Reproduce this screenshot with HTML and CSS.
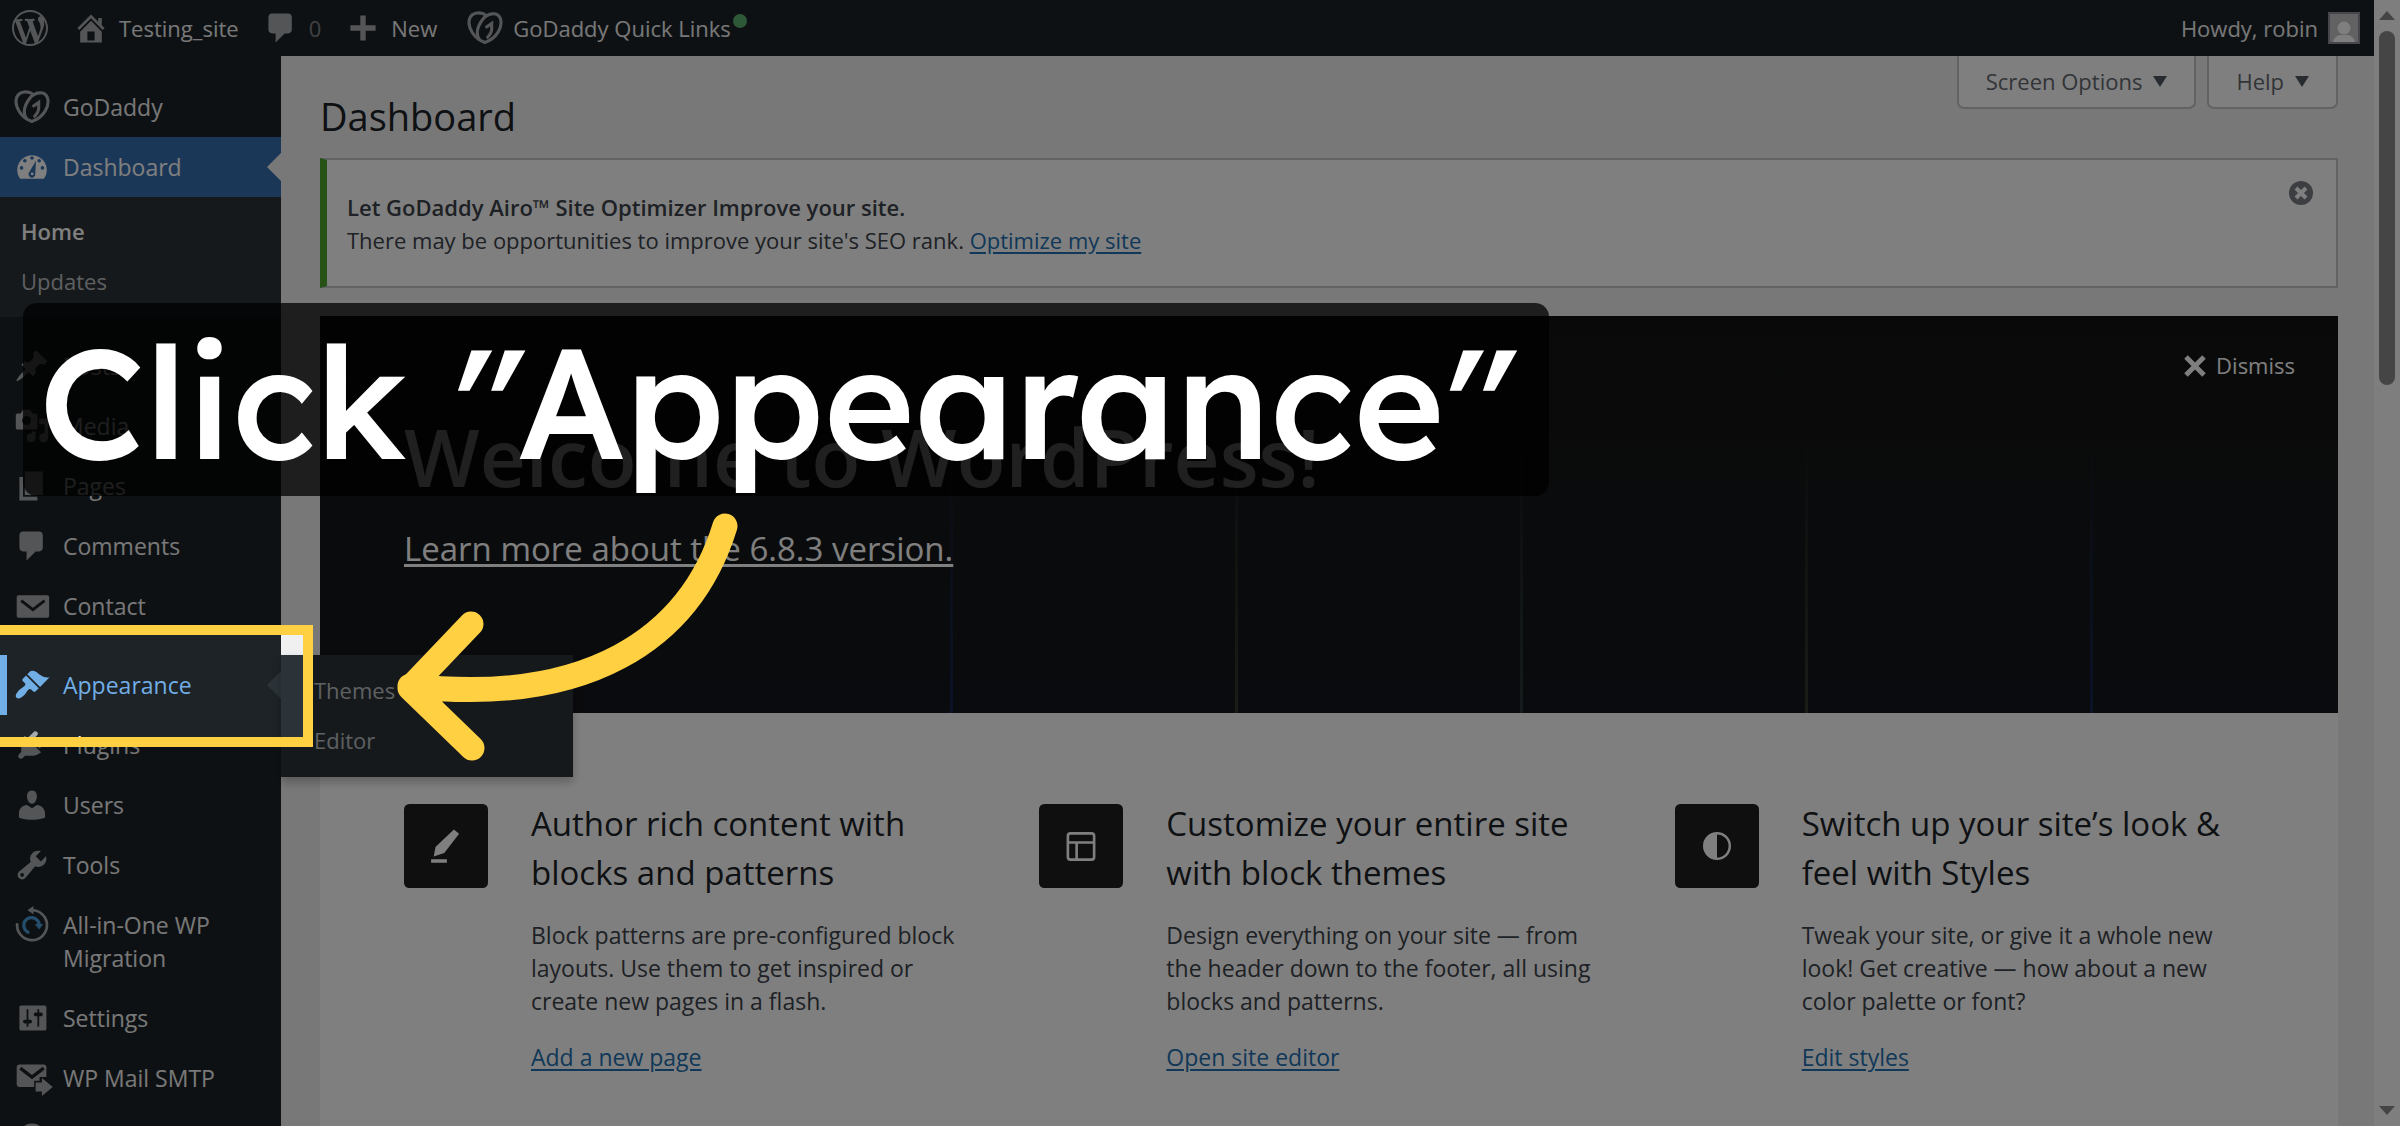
FILE: index.html
```html
<!DOCTYPE html>
<html lang="en">
<head>
    <meta charset="UTF-8">
    <meta name="viewport" content="width=device-width, initial-scale=1.0">
    <title>Dashboard - Testing_site</title>
    <link rel="stylesheet" href="styles.css">
</head>
<body>

<svg class="sprite" aria-hidden="true">
    <symbol id="i-godaddy" viewBox="0 0 35 32">
        <g fill="none" stroke="currentColor" stroke-width="3" stroke-linecap="round">
            <path d="M19 4C14 0 5 0 2.500 7C0 15 7 27 17.500 30"/>
            <path d="M17.500 30C29 26 35 15 32.500 7C30 0 20 1 15 8C9 16 9 23 12 27"/>
            <path d="M19 15L24 11.500V17C24 20 22 23 20 25"/>
        </g>
    </symbol>
    <symbol id="i-comment" viewBox="0 0 20 20"><path fill="currentColor" d="M5 2h9c1.100 0 2 .9 2 2v7c0 1.100-.9 2-2 2h-2l-5 5v-5H5c-1.100 0-2-.9-2-2V4c0-1.100.9-2 2-2z"/></symbol>
</svg>

<div class="window">
    <div class="admin">
        <header class="adminbar">
            <a class="bar-item" href="#" aria-label="About WordPress">
                <svg class="icon" viewBox="0 0 20 20"><path fill="currentColor" d="M20 10c0-5.510-4.490-10-10-10C4.480 0 0 4.490 0 10c0 5.520 4.480 10 10 10 5.510 0 10-4.480 10-10zM7.780 15.370L4.370 6.220c.55-.02 1.170-.08 1.170-.08.5-.06.44-1.130-.06-1.110 0 0-1.450.11-2.370.11-.18 0-.37 0-.58-.01C4.120 2.690 6.870 1.110 10 1.110c2.330 0 4.450.87 6.050 2.340-.68-.11-1.650.39-1.650 1.580 0 .74.45 1.360.9 2.100.35.61.55 1.360.55 2.460 0 1.490-1.400 5-1.400 5l-3.030-8.370c.54-.02.82-.17.82-.17.5-.05.44-1.250-.06-1.220 0 0-1.440.12-2.380.12-.87 0-2.330-.12-2.330-.12-.5-.03-.56 1.200-.06 1.220l.92.08 1.260 3.410zM17.410 10c.24-.64.74-1.870.43-4.250.7 1.290 1.050 2.710 1.050 4.250 0 3.290-1.730 6.240-4.400 7.780.97-2.590 1.940-5.200 2.920-7.780zM6.100 18.090C3.120 16.650 1.110 13.530 1.110 10c0-1.300.23-2.480.72-3.590C3.250 10.300 4.670 14.200 6.100 18.090zm4.030-6.630l2.580 6.980c-.86.29-1.760.45-2.710.45-.79 0-1.570-.11-2.290-.33.81-2.380 1.620-4.740 2.420-7.100z"/></svg>
            </a>
            <a class="bar-item bar-site" href="#">
                <svg class="icon" viewBox="0 0 20 20"><path fill="currentColor" fill-rule="evenodd" d="M16 8.500l1.530 1.530-1.060 1.060L10 4.600l-6.470 6.490-1.060-1.060L10 2.500l4 4v-2h2v4zm-6-2.460l6 5.990V18H4v-5.970zM12 17v-5H8v5h4z"/></svg>
                <span>Testing_site</span>
            </a>
            <a class="bar-item bar-comments" href="#">
                <svg class="icon"><use href="#i-comment"/></svg>
                <span class="count">0</span>
            </a>
            <a class="bar-item bar-new" href="#">
                <svg class="icon" viewBox="0 0 20 20"><path fill="currentColor" d="M8.500 3h3v5.500H17v3h-5.500V17h-3v-5.500H3v-3h5.500z"/></svg>
                <span>New</span>
            </a>
            <a class="bar-item bar-links" href="#">
                <svg class="icon"><use href="#i-godaddy"/></svg>
                <span>GoDaddy Quick Links</span>
                <i class="dot"></i>
            </a>
            <a class="bar-item bar-user" href="#">
                <span>Howdy, robin</span>
                <svg class="avatar" viewBox="0 0 32 32"><path fill="#c4c4c4" stroke="#8c8f94" stroke-width="2" d="M1 1h30v30H1z"/><circle cx="16" cy="16" r="6.500" fill="#fff"/><path fill="#fff" d="M5 30c1-5 5-7 8-7h6c3 0 7 2 8 7z"/></svg>
            </a>
        </header>

        <div class="admin-body">
            <nav class="sidebar">
                <ul class="menu">
                    <li><a href="#"><svg class="icon"><use href="#i-godaddy"/></svg><span>GoDaddy</span></a></li>
                    <li class="current">
                        <a href="#"><svg class="icon" viewBox="0 0 20 20"><path fill="currentColor" d="M3.400 16.500A8.200 8.200 0 1 1 16.600 16.500z"/><g fill="#376eae"><circle cx="10" cy="5" r="1"/><circle cx="6" cy="6.500" r="1"/><circle cx="14" cy="6.500" r="1"/><circle cx="4.200" cy="10.500" r="1"/><circle cx="15.800" cy="10.500" r="1"/><path d="M12.200 6.500l-.4 7.200a1.900 1.900 0 1 1-3.200-1z"/></g><circle cx="10.100" cy="13.800" r=".8" fill="currentColor"/></svg><span>Dashboard</span></a>
                        <ul class="submenu">
                            <li><a class="active" href="#">Home</a></li>
                            <li><a href="#">Updates</a></li>
                        </ul>
                    </li>
                    <li class="separator"></li>
                    <li><a href="#"><svg class="icon" viewBox="0 0 20 20"><path fill="currentColor" d="M10.440 3.020l1.820-1.820 6.360 6.350-1.830 1.820c-1.050-.68-2.480-.57-3.410.36l-.75.75c-.92.93-1.040 2.350-.35 3.410l-1.830 1.820-2.410-2.410-2.800 2.790c-.42.42-3.380 2.710-3.800 2.290s1.860-3.390 2.280-3.810l2.790-2.790L4.100 9.360l1.830-1.820c1.050.69 2.480.57 3.400-.36l.75-.75c.93-.92 1.050-2.350.36-3.410z"/></svg><span>Posts</span></a></li>
                    <li><a href="#"><svg class="icon" viewBox="0 0 20 20"><path fill="currentColor" fill-rule="evenodd" d="M13 11V4c0-.55-.45-1-1-1h-1.670L9 1H5L3.670 3H2c-.55 0-1 .45-1 1v7c0 .55.45 1 1 1h10c.55 0 1-.45 1-1zM7 4.500c1.380 0 2.500 1.120 2.500 2.500S8.380 9.500 7 9.500 4.500 8.380 4.500 7 5.620 4.500 7 4.500zM14 6h5v10.500c0 1.380-1.120 2.500-2.500 2.500S14 17.880 14 16.500s1.120-2.500 2.500-2.500c.17 0 .34.02.5.05V9h-3V6zm-4 8.050V13h2v3.500c0 1.380-1.120 2.500-2.500 2.500S7 17.880 7 16.500 8.120 14 9.500 14c.17 0 .34.02.5.05z"/></svg><span>Media</span></a></li>
                    <li><a href="#"><svg class="icon" viewBox="0 0 20 20"><path fill="currentColor" d="M6 15V2h10v13H6zm-1 1h8v2H3V5h2v11z"/></svg><span>Pages</span></a></li>
                    <li><a href="#"><svg class="icon"><use href="#i-comment"/></svg><span>Comments</span></a></li>
                    <li><a href="#"><svg class="icon" viewBox="0 0 20 20"><rect x="1.500" y="4" width="18" height="12.500" rx="1" fill="currentColor"/><path d="M4 7l6.500 5L17 7" fill="none" stroke="#1d2327" stroke-width="1.600"/></svg><span>Contact</span></a></li>
                    <li class="separator"></li>
                    <li class="hovered">
                        <a href="#"><svg class="icon" viewBox="0 0 20 20"><path fill="currentColor" d="M14.480 11.060L7.410 3.990l1.500-1.500c.5-.56 2.300-.47 3.510.32 1.210.8 1.430 1.280 2.910 2.100 1.180.64 2.450 1.260 4.450.85zm-.71.71L6.700 4.700 4.930 6.470c-.39.39-.39 1.020 0 1.410l1.060 1.060c.39.39.39 1.030 0 1.420-.6.6-1.430 1.110-2.210 1.690-.35.26-.7.53-1.010.84C1.430 14.230.4 16.080 1.400 17.070c.99 1 2.840-.03 4.180-1.360.31-.31.58-.66.85-1.020.57-.78 1.080-1.610 1.690-2.210.39-.39 1.020-.39 1.410 0l1.060 1.060c.39.39 1.020.39 1.410 0z"/></svg><span>Appearance</span></a>
                        <ul class="flyout">
                            <li><a href="#">Themes</a></li>
                            <li><a href="#">Editor</a></li>
                        </ul>
                    </li>
                    <li><a href="#"><svg class="icon" viewBox="0 0 20 20"><path fill="currentColor" d="M13.110 4.360L9.870 7.600 8 5.730l3.240-3.240c.35-.34 1.050-.2 1.560.32.52.51.66 1.210.31 1.550zm-8 1.770l.91-1.120 9.010 9.010-1.190.84c-.71.71-2.630 1.160-3.820 1.160H6.140L4.900 17.260c-.59.59-1.540.59-2.120 0-.59-.58-.59-1.530 0-2.120l1.240-1.240v-3.880c0-1.130.4-3.190 1.090-3.890zm7.260 3.970l3.240-3.240c.34-.35 1.040-.21 1.550.31.52.51.66 1.210.31 1.550l-3.240 3.250z"/></svg><span>Plugins</span></a></li>
                    <li><a href="#"><svg class="icon" viewBox="0 0 20 20"><path fill="currentColor" d="M10 9.250c-2.270 0-2.730-3.440-2.730-3.440C7 4.020 7.820 2 9.970 2c2.160 0 2.980 2.020 2.710 3.810 0 0-.41 3.440-2.680 3.440zm0 2.570L12.720 10c2.390 0 4.520 2.330 4.520 4.530v2.490s-3.650 1.130-7.240 1.130c-3.650 0-7.240-1.130-7.240-1.130v-2.490c0-2.250 1.940-4.480 4.470-4.480z"/></svg><span>Users</span></a></li>
                    <li><a href="#"><svg class="icon" viewBox="0 0 20 20"><path fill="currentColor" fill-rule="evenodd" d="M16.680 9.770c-1.340 1.340-3.300 1.670-4.950.99l-5.410 6.520c-.99.99-2.590.99-3.580 0s-.99-2.590 0-3.570l6.520-5.420c-.68-1.650-.35-3.610.99-4.950 1.280-1.280 3.120-1.620 4.720-1.060l-2.890 2.890 2.820 2.820 2.860-2.870c.53 1.580.18 3.390-1.080 4.650zM3.810 16.210c.4.39 1.040.39 1.430 0 .4-.4.4-1.040 0-1.430-.39-.4-1.030-.4-1.430 0-.39.39-.39 1.030 0 1.430z"/></svg><span>Tools</span></a></li>
                    <li><a href="#"><svg class="icon" viewBox="0 0 20 20"><g fill="none" stroke-width="1.500"><path stroke="currentColor" d="M1.800 9a8.300 8.300 0 1 0 8.200-7.200"/><path stroke="#4a9bd8" stroke-width="1.800" d="M8.500 14.300A4.300 4.300 0 1 1 14 10"/></g><path fill="currentColor" d="M7.500 1.800L10.800-.5v4.500z"/><path fill="#4a9bd8" d="M11.500 9.500h4.800L14 12.500z"/></svg><span>All-in-One WP Migration</span></a></li>
                    <li><a href="#"><svg class="icon" viewBox="0 0 20 20"><path fill="currentColor" fill-rule="evenodd" d="M18 16V4c0-.55-.45-1-1-1H4c-.55 0-1 .45-1 1v12c0 .55.45 1 1 1h13c.55 0 1-.45 1-1zM8 11h1c.55 0 1 .45 1 1s-.45 1-1 1H8v1.500c0 .28-.22.5-.5.5s-.5-.22-.5-.5V13H6c-.55 0-1-.45-1-1s.45-1 1-1h1V5.500c0-.28.22-.5.5-.5s.5.22.5.5V11zm5-2h-1c-.55 0-1-.45-1-1s.45-1 1-1h1V5.500c0-.28.22-.5.5-.5s.5.22.5.5V7h1c.55 0 1 .45 1 1s-.45 1-1 1h-1v5.500c0 .28-.22.5-.5.5s-.5-.22-.5-.5V9z"/></svg><span>Settings</span></a></li>
                    <li><a href="#"><svg class="icon" viewBox="0 0 20 20"><path fill="currentColor" d="M3 2.500h13.500c.8 0 1.500.6 1.500 1.500v5.500h-3.800v2h-3V15H3c-.8 0-1.500-.7-1.500-1.500V4c0-.9.7-1.500 1.500-1.500zM12 12.500h3.500V10l6 5-6 5v-2.500H12z"/><path fill="none" stroke="#1d2327" stroke-width="1.800" d="M3.500 4.500L10 9.500l6.500-5"/></svg><span>WP Mail SMTP</span></a></li>
                    <li><a href="#" aria-label="More"><svg class="icon" viewBox="0 0 20 20"><circle cx="10" cy="10" r="8" fill="currentColor"/></svg></a></li>
                </ul>
            </nav>

            <main class="content">
                <div class="screen-meta">
                    <button type="button">Screen Options <span class="caret"></span></button>
                    <button type="button">Help <span class="caret"></span></button>
                </div>

                <h1>Dashboard</h1>

                <div class="notice">
                    <p><strong>Let GoDaddy Airo™ Site Optimizer Improve your site.</strong></p>
                    <p>There may be opportunities to improve your site's SEO rank. <a href="#">Optimize my site</a></p>
                    <button class="notice-dismiss" type="button" aria-label="Dismiss this notice">
                        <svg viewBox="0 0 24 24"><circle cx="12" cy="12" r="12" fill="#787c82"/><path stroke="#fff" stroke-width="4" d="M7 7l10 10M17 7L7 17"/></svg>
                    </button>
                </div>

                <section class="welcome">
                    <div class="welcome-header">
                        <div class="beams"><i></i><i></i><i></i><i></i><i></i></div>
                        <h2>Welcome to WordPress!</h2>
                        <p><a href="#">Learn more about the 6.8.3 version.</a></p>
                        <a class="welcome-close" href="#">
                            <svg viewBox="0 0 22 22"><path stroke="currentColor" stroke-width="5" d="M2 2l18 18M20 2L2 20"/></svg>
                            Dismiss
                        </a>
                    </div>

                    <div class="columns">
                        <div class="column">
                            <svg class="tile" viewBox="0 0 48 48"><rect width="48" height="48" rx="3" fill="#1e1e1e"/><path fill="#fff" d="M28.500 14.500l3 2.500-8.500 11-6 2 1-5.500zM15.500 31.500h9v2h-9z"/></svg>
                            <div>
                                <h3>Author rich content with blocks and patterns</h3>
                                <p>Block patterns are pre-configured block layouts. Use them to get inspired or create new pages in a flash.</p>
                                <a href="#">Add a new page</a>
                            </div>
                        </div>
                        <div class="column">
                            <svg class="tile" viewBox="0 0 48 48"><rect width="48" height="48" rx="3" fill="#1e1e1e"/><path fill="none" stroke="#fff" stroke-width="1.500" d="M18 16.800h12q1.500 0 1.500 1.500v12q0 1.500-1.500 1.500H18q-1.500 0-1.500-1.500v-12q0-1.500 1.500-1.500zM16.500 22h15M21.500 22v9.500"/></svg>
                            <div>
                                <h3>Customize your entire site with block themes</h3>
                                <p>Design everything on your site — from the header down to the footer, all using blocks and patterns.</p>
                                <a href="#">Open site editor</a>
                            </div>
                        </div>
                        <div class="column">
                            <svg class="tile" viewBox="0 0 48 48"><rect width="48" height="48" rx="3" fill="#1e1e1e"/><circle cx="24" cy="24" r="7.300" fill="none" stroke="#fff" stroke-width="1.400"/><path fill="#fff" d="M24 16.500a7.500 7.500 0 0 0 0 15z"/></svg>
                            <div>
                                <h3>Switch up your site’s look &amp; feel with Styles</h3>
                                <p>Tweak your site, or give it a whole new look! Get creative — how about a new color palette or font?</p>
                                <a href="#">Edit styles</a>
                            </div>
                        </div>
                    </div>
                </section>
            </main>
        </div>
    </div>

    <div class="scrollbar">
        <i class="up"></i>
        <i class="thumb"></i>
        <i class="down"></i>
    </div>

    <!-- guide overlay -->
    <div class="spotlight"></div>
    <div class="caption">Click <i>"</i>Appearance<i>"</i></div>
    <svg class="pointer" viewBox="0 0 380 280"><path fill="none" stroke="#ffd042" stroke-width="25" stroke-linecap="round" stroke-linejoin="round" d="M345 26C310 140 206 206 30 186M91 124L30 188L92 248"/></svg>
</div>

</body>
</html>
```

FILE: styles.css
```css
* {
    box-sizing: border-box;
}
body {
    margin: 0;
    font-family: "Segoe UI", "Open Sans", "Noto Sans", sans-serif;
    font-size: 23px;
    line-height: 33px;
    color: #3c434a;
    background: #f0f0f1;
}
h1, h2, h3, p, ul {
    margin: 0;
    padding: 0;
}
ul {
    list-style: none;
}
a {
    color: #2271b1;
    text-underline-offset: 3px;
}
button {
    font: inherit;
    cursor: pointer;
}
.sprite {
    display: none;
}
.window {
    position: relative;
    display: flex;
    height: 100vh;
    overflow: hidden;
}
.admin {
    flex: 1;
    min-width: 0;
}
.icon {
    width: 36px;
    height: 36px;
    flex: none;
    color: #a7aaad;
    overflow: visible;
}

/* top bar */
.adminbar {
    display: flex;
    height: 56px;
    padding: 0 14px 0 12px;
    background: #1d2327;
}
.bar-item {
    display: flex;
    align-items: center;
    gap: 10px;
    color: #f0f0f1;
    font-size: 22px;
    text-decoration: none;
}
.bar-site {
    margin-left: 25px;
}
.bar-comments, .bar-new {
    margin-left: 24px;
}
.bar-links {
    margin-left: 30px;
}
.count {
    color: #80858a;
}
.dot {
    width: 14px;
    height: 14px;
    margin: -14px 0 0 -8px;
    border-radius: 50%;
    background: #5cb270;
}
.bar-user {
    margin-left: auto;
}
.avatar {
    width: 32px;
    height: 32px;
}

/* side menu */
.admin-body {
    display: flex;
}
.sidebar {
    width: 281px;
    flex: none;
    height: 100vh;
    padding-top: 21px;
    background: #1d2327;
}
.menu > li {
    position: relative;
}
.menu > li > a {
    display: flex;
    gap: 13px;
    min-height: 60px;
    padding: 14px 40px 13px 14px;
    color: #f0f0f1;
    text-decoration: none;
}
.menu .icon {
    margin: -2px 0 -1px;
}
.menu > li.separator {
    height: 19px;
}
.menu > li.current > a {
    position: relative;
    color: #fff;
    background: #376eae;
}
.current .icon {
    color: #fff;
}
.current > a::after {
    content: "";
    position: absolute;
    right: 0;
    top: 16px;
    border: 14px solid transparent;
    border-left: 0;
    border-right-color: #f0f0f1;
}
.submenu {
    padding: 10px 0;
    background: #2c3338;
}
.submenu a, .flyout a {
    display: block;
    padding: 8px 21px 9px;
    color: #bcc0c4;
    font-size: 22px;
    text-decoration: none;
}
.submenu .active {
    color: #fff;
    font-weight: 600;
}
.menu > li.hovered > a {
    color: #72aee6;
    box-shadow: inset 7px 0 0 #72aee6;
}
.hovered .icon {
    color: #72aee6;
}
.hovered::after {
    content: "";
    position: absolute;
    right: 0;
    top: 16px;
    border: 14px solid transparent;
    border-left: 0;
    border-right-color: #2c3338;
}
.flyout {
    position: absolute;
    left: 100%;
    top: 0;
    width: 292px;
    padding: 11px 0;
    background: #2c3338;
    box-shadow: 0 5px 9px rgba(0, 0, 0, .25);
    z-index: 2;
}
.flyout a {
    padding-left: 33px;
}

/* content */
.content {
    position: relative;
    flex: 1;
    min-width: 0;
    padding: 36px 36px 0 39px;
}
.screen-meta {
    position: absolute;
    top: 0;
    right: 36px;
    display: flex;
    gap: 11px;
}
.screen-meta button {
    display: flex;
    align-items: center;
    gap: 11px;
    height: 53px;
    padding: 0 27px;
    border: 2px solid #c3c4c7;
    border-top: 0;
    border-radius: 0 0 7px 7px;
    background: #fff;
    color: #646970;
    font-size: 22px;
}
.caret {
    border: 7px solid transparent;
    border-top: 11px solid #50575e;
    border-bottom: 0;
}
h1 {
    color: #1d2327;
    font-size: 38px;
    font-weight: 400;
    line-height: 48px;
}
.notice {
    position: relative;
    margin: 18px 0 28px;
    padding: 31px 60px 29px 20px;
    border: 2px solid #c3c4c7;
    border-left: 7px solid #4ea52c;
    background: #fff;
    font-size: 22px;
}
.notice strong {
    font-weight: 600;
}
.notice-dismiss {
    position: absolute;
    top: 21px;
    right: 23px;
    width: 24px;
    height: 24px;
    padding: 0;
    border: 0;
    background: none;
}
.notice-dismiss svg {
    display: block;
}
.welcome {
    background: #fff;
    min-height: 100vh;
}
.welcome-header {
    position: relative;
    height: 397px;
    padding: 82px 84px 0;
    background: linear-gradient(#131313, #151719 55%, #15161c);
    color: #fff;
}
.welcome-header h2 {
    position: relative;
    font-size: 80px;
    font-weight: 600;
    line-height: 116px;
}
.welcome-header p {
    position: relative;
    margin-top: 12px;
    font-size: 33px;
    line-height: 46px;
}
.welcome-header a {
    color: #fff;
    text-decoration-thickness: 3px;
}
.welcome-header .welcome-close {
    position: absolute;
    top: 33px;
    right: 43px;
    display: flex;
    align-items: center;
    gap: 10px;
    font-size: 22px;
    text-decoration: none;
}
.welcome-close svg {
    width: 22px;
    height: 22px;
}
.beams {
    position: absolute;
    inset: 120px 245px 0 630px;
    display: flex;
    justify-content: space-between;
}
.beams i {
    width: 3px;
    background: linear-gradient(transparent, #37382e);
}
.beams i:first-child, .beams i:last-child {
    background: linear-gradient(transparent, #18264f);
}
.beams i:nth-child(3) {
    background: linear-gradient(transparent, #2a3836);
}
.columns {
    display: grid;
    grid-template-columns: repeat(3, 1fr);
    gap: 56px;
    padding: 86px 84px;
}
.column {
    display: flex;
    gap: 43px;
}
.tile {
    width: 84px;
    height: 84px;
    flex: none;
    margin-top: 5px;
}
.column h3 {
    color: #1d2327;
    font-size: 33px;
    font-weight: 400;
    line-height: 49px;
}
.column p {
    margin: 22px 0 23px;
}

/* window scrollbar */
.scrollbar {
    display: flex;
    flex-direction: column;
    align-items: center;
    width: 26px;
    padding: 11px 0;
    background: #fcfcfc;
}
.scrollbar .up {
    border: 8px solid transparent;
    border-top: 0;
    border-bottom: 9px solid #8b8b8b;
}
.scrollbar .thumb {
    width: 16px;
    height: 354px;
    margin: 11px 0 auto;
    border-radius: 8px;
    background: #8b8b8b;
}
.scrollbar .down {
    border: 8px solid transparent;
    border-bottom: 0;
    border-top: 9px solid #8b8b8b;
}

/* guide overlay */
.spotlight {
    position: absolute;
    left: 0;
    top: 625px;
    width: 313px;
    height: 122px;
    border: 10px solid #ffd042;
    border-left: 0;
    box-shadow: 0 0 0 4000px rgba(0, 0, 0, .5);
    z-index: 5;
}
.caption {
    position: absolute;
    left: 23px;
    top: 303px;
    padding: 6px 40px 3px 16px;
    border-radius: 14px;
    background: rgba(0, 0, 0, .75);
    color: #fff;
    font-family: Lexend, Inter, sans-serif;
    font-feature-settings: "cv11";
    font-size: 155px;
    font-weight: 500;
    line-height: 184px;
    white-space: nowrap;
    z-index: 6;
}
.caption i {
    margin: 0 15px 0 -18px;
}
.pointer {
    position: absolute;
    left: 380px;
    top: 500px;
    width: 380px;
    height: 280px;
    z-index: 7;
}
```
